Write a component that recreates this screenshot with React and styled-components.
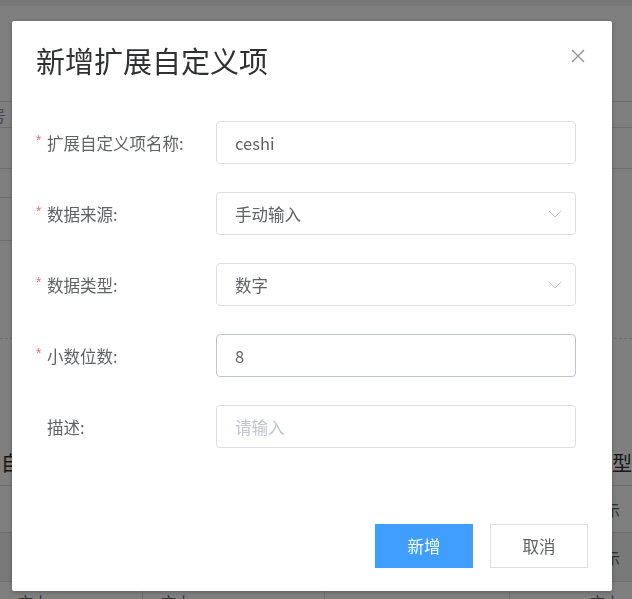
import React from "react";
import styled, { createGlobalStyle } from "styled-components";

const Global = createGlobalStyle`
  * { box-sizing: border-box; }
  html, body { margin: 0; padding: 0; background: #fff; }
  body {
    font-family: "Noto Sans CJK SC", "Microsoft YaHei", "Liberation Sans", sans-serif;
    overflow: hidden;
    width: 632px;
    height: 599px;
  }
`;

/* ---------- background page ---------- */
const Page = styled.div`
  width: 632px;
  height: 599px;
  overflow: hidden;
  display: flex;
  flex-direction: column;
  color: #606266;
`;

const TopStrip = styled.div`
  height: 6px;
  background: #eeeeee;
  flex: none;
`;

const Band = styled.div`
  flex: none;
  height: ${(p) => p.$h}px;
  border-bottom: ${(p) => (p.$line ? `1px ${p.$dashed ? "dashed" : "solid"} #dcdcdc` : "none")};
  display: flex;
  align-items: center;
  background: ${(p) => p.$bg || "transparent"};
`;

const LeftLineBand = styled.div`
  flex: none;
  height: ${(p) => p.$h}px;
  display: flex;
`;

const LeftLine = styled.div`
  width: 300px;
  border-bottom: 1px solid #dcdcdc;
`;

const ClipLabel = styled.div`
  width: 6px;
  display: flex;
  justify-content: flex-end;
  white-space: nowrap;
  font-size: 16px;
  color: #909399;
`;

const Table = styled.div`
  flex: none;
  display: flex;
  flex-direction: column;
`;

const TRow = styled.div`
  display: grid;
  grid-template-columns: 143px 182px 185px 122px;
  height: ${(p) => p.$h}px;
  border-bottom: 1px solid #dcdcdc;
  background: ${(p) => p.$bg || "#fff"};
`;

const TCell = styled.div`
  display: flex;
  align-items: center;
  justify-content: ${(p) => (p.$right ? "flex-end" : "flex-start")};
  padding: ${(p) => (p.$right ? "0 12px 0 0" : "0 0 0 18px")};
  white-space: nowrap;
  overflow: hidden;
  border-right: ${(p) => (p.$last ? "none" : "1px solid #dcdcdc")};
  font-size: ${(p) => (p.$head ? "20px" : "15px")};
  color: ${(p) => (p.$head ? "#303133" : "#606266")};
`;

const HeadCell = styled(TCell)`
  padding: ${(p) => (p.$right ? "0 0 0 0" : "0 0 0 1px")};
  overflow: visible;
`;

const Overlay = styled.div`
  position: fixed;
  inset: 0;
  background: rgba(0, 0, 0, 0.5);
`;

/* ---------- dialog ---------- */
const Dialog = styled.div`
  position: fixed;
  left: 12px;
  top: 21px;
  width: 600px;
  height: 570px;
  background: #fff;
  border-radius: 2px;
  box-shadow: 0 1px 4px rgba(0, 0, 0, 0.3);
  display: flex;
  flex-direction: column;
`;

const Header = styled.div`
  display: flex;
  align-items: center;
  justify-content: space-between;
  padding: 19px 27px 0 24px;
  height: 59px;
  flex: none;
`;

const Title = styled.div`
  font-size: 29px;
  line-height: 40px;
  color: #303133;
  letter-spacing: 0px;
`;

const CloseBtn = styled.button`
  border: none;
  background: none;
  padding: 0;
  width: 14px;
  height: 14px;
  display: flex;
  margin-top: -8px;
  cursor: pointer;
`;

const Body = styled.div`
  padding: 41px 36px 0 24px;
  display: flex;
  flex-direction: column;
  gap: 28px;
`;

const Row = styled.div`
  display: flex;
  align-items: center;
  height: 43px;
`;

const Label = styled.div`
  width: 180px;
  flex: none;
  display: flex;
  align-items: center;
  font-size: 16.5px;
  color: #606266;
  line-height: 20px;
`;

const Star = styled.span`
  width: 11px;
  flex: none;
  color: #f56c6c;
  font-size: 14px;
  line-height: 14px;
  margin-top: -6px;
  font-family: "Liberation Sans", sans-serif;
`;

const Field = styled.div`
  width: 360px;
  height: 43px;
  border: 1px solid ${(p) => (p.$hover ? "#c0c4cc" : "#dcdfe6")};
  border-radius: 4px;
  display: flex;
  align-items: center;
  justify-content: space-between;
  padding: 0 13px 0 18px;
  font-size: 16.5px;
  color: ${(p) => (p.$placeholder ? "#c0c4cc" : "#606266")};
`;

const Footer = styled.div`
  margin-top: auto;
  display: flex;
  justify-content: flex-end;
  gap: 17px;
  padding: 0 24px 23px 0;
`;

const Button = styled.button`
  width: 98px;
  height: 44px;
  border: 1px solid ${(p) => (p.$primary ? "#409eff" : "#dcdfe6")};
  background: ${(p) => (p.$primary ? "#409eff" : "#fff")};
  color: ${(p) => (p.$primary ? "#fff" : "#606266")};
  font-family: inherit;
  font-size: 16.5px;
  border-radius: 0;
  padding: 0;
  cursor: pointer;
`;

const Chevron = () => (
  <svg width="14" height="8" viewBox="0 0 14 8" fill="none">
    <path d="M1 1 L7 7 L13 1" stroke="#c0c4cc" strokeWidth="1" />
  </svg>
);

const CloseIcon = () => (
  <svg width="14" height="14" viewBox="0 0 14 14" fill="none">
    <path d="M1 1 L13 13 M13 1 L1 13" stroke="#909399" strokeWidth="1.3" />
  </svg>
);

const fields = [
  { label: "扩展自定义项名称:", value: "ceshi", required: true },
  { label: "数据来源:", value: "手动输入", required: true, select: true },
  { label: "数据类型:", value: "数字", required: true, select: true },
  { label: "小数位数:", value: "8", required: true, hover: true },
  { label: "描述:", value: "请输入", placeholder: true },
];

export default function App() {
  return (
    <>
      <Global />
      <Page>
        <TopStrip />
        <Band $h={96} $line />
        <Band $h={26} $line>
          <ClipLabel>编号</ClipLabel>
        </Band>
        <Band $h={41} $line />
        <LeftLineBand $h={29}>
          <LeftLine />
        </LeftLineBand>
        <LeftLineBand $h={43}>
          <LeftLine />
        </LeftLineBand>
        <Band $h={98} $line $dashed />
        <Band $h={100} />
        <Table>
          <TRow $h={47}>
            <HeadCell $head>自定义项名称</HeadCell>
            <HeadCell $head>数据来源</HeadCell>
            <HeadCell $head>描述</HeadCell>
            <HeadCell $head $right $last>数据类型</HeadCell>
          </TRow>
          <TRow $h={47}>
            <TCell>ceshi</TCell>
            <TCell>手动输入</TCell>
            <TCell>--</TCell>
            <TCell $right $last>显示</TCell>
          </TRow>
          <TRow $h={49} $bg="#f2f2f2">
            <TCell>test</TCell>
            <TCell>手动输入</TCell>
            <TCell>--</TCell>
            <TCell $right $last>显示</TCell>
          </TRow>
          <TRow $h={40}>
            <TCell>文本</TCell>
            <TCell>文本</TCell>
            <TCell>--</TCell>
            <TCell $right $last>文本</TCell>
          </TRow>
        </Table>
      </Page>
      <Overlay />
      <Dialog role="dialog">
        <Header>
          <Title>新增扩展自定义项</Title>
          <CloseBtn aria-label="关闭">
            <CloseIcon />
          </CloseBtn>
        </Header>
        <Body>
          {fields.map((f) => (
            <Row key={f.label}>
              <Label>
                <Star>{f.required ? "*" : ""}</Star>
                {f.label}
              </Label>
              <Field $hover={f.hover} $placeholder={f.placeholder}>
                <span>{f.value}</span>
                {f.select && <Chevron />}
              </Field>
            </Row>
          ))}
        </Body>
        <Footer>
          <Button $primary>新增</Button>
          <Button>取消</Button>
        </Footer>
      </Dialog>
    </>
  );
}
